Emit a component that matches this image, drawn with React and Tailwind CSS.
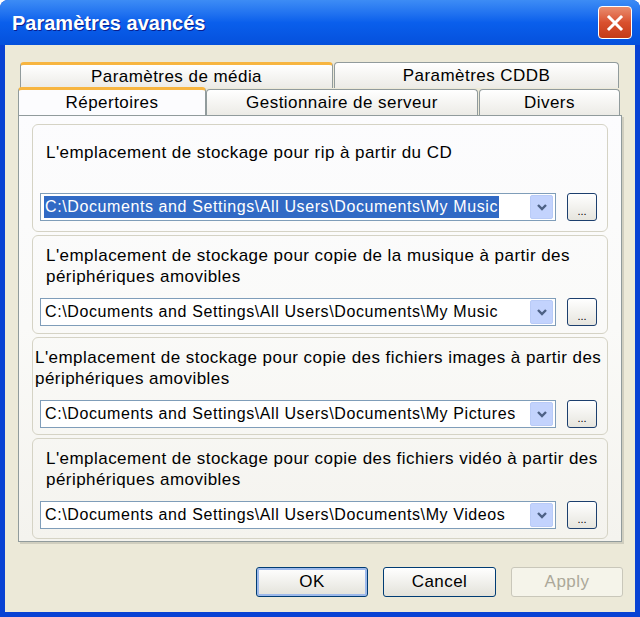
import { useState } from "react";

const font = { fontFamily: '"Liberation Sans", Arial, sans-serif' };

const Chevron = () => (
    <svg width="12" height="9" viewBox="0 0 12 9">
        <path d="M2 2 L6 6 L10 2" fill="none" stroke="#4D6185" strokeWidth="2.4" />
    </svg>
);

const Combo = ({ value, selected }) => (
    <div className="flex items-center gap-[11px]">
        <div className="flex items-center h-[28px] w-[516px] border border-[#7F9DB9] bg-white pl-[3px] pr-[2px]">
            <div className="flex-1 flex items-center h-[22px] overflow-hidden whitespace-nowrap text-[16px] tracking-[0.6px]">
                <span className={selected ? "bg-[#316AC5] text-white px-[1px] leading-[22px]" : "px-[1px] leading-[22px] text-black"}>
                    {value}
                </span>
            </div>
            <div className="w-[23px] h-[24px] rounded-[2px] bg-[#C3D3FD] border border-[#B9CBF7] flex items-center justify-center">
                <Chevron />
            </div>
        </div>
        <button className="w-[30px] h-[28px] rounded-[3px] border border-[#1C3F6E] bg-gradient-to-b from-white to-[#E6E5DE] text-[11px] leading-[12px] tracking-normal text-black pt-[8px]">
            ...
        </button>
    </div>
);

const Group = ({ lines, value, selected, h, pl, pt, gap }) => (
    <div className={`rounded-[6px] border border-[#D5D3C5] flex flex-col ${h}`}>
        <div className={`${pl} ${pt} leading-[21px] text-black whitespace-nowrap`}>
            {lines.map((l) => <div key={l}>{l}</div>)}
        </div>
        <div className={`pl-[7px] ${gap}`}>
            <Combo value={value} selected={selected} />
        </div>
    </div>
);

export default function App() {
    const [tab] = useState("rep");

    return (
        <div className="w-[640px] h-[617px] bg-white" style={font}>
            <div className="w-full h-full flex flex-col rounded-t-[8px] overflow-hidden bg-[#0842D4]">
                <div className="h-[45px] flex items-center justify-between pl-[12px] pr-[8px] bg-gradient-to-b from-[#3D8CF5] via-[#0A5FEC] to-[#0550DC]">
                    <span className="text-white font-bold text-[20px]" style={{ textShadow: "1px 1px 0 #0A1E8C" }}>
                        Paramètres avancés
                    </span>
                    <div className="w-[34px] h-[33px] rounded-[4px] border border-white bg-gradient-to-b from-[#E98C6E] via-[#D9502E] to-[#C43A17] flex items-center justify-center">
                        <svg width="18" height="18" viewBox="0 0 18 18">
                            <path d="M3 3 L15 15 M15 3 L3 15" stroke="white" strokeWidth="3" strokeLinecap="square" />
                        </svg>
                    </div>
                </div>

                <div className="flex-1 mx-[5px] mb-[5px] bg-[#ECE9D8] flex flex-col pt-[17px] pl-[13px] pr-[12px] text-[17px] tracking-[0.45px]">
                    {/* back row of tabs */}
                    <div className="flex pl-[2px] h-[26px]">
                        <div className="w-[313px] h-[26px] rounded-t-[4px] border border-b-0 border-[#919B9C] border-t-[3px] border-t-[#F7B540] bg-gradient-to-b from-white to-[#ECEBE6] flex items-center justify-center">
                            Paramètres de média
                        </div>
                        <div className="w-[285px] ml-[1px] h-[26px] rounded-t-[4px] border border-b-0 border-[#919B9C] bg-gradient-to-b from-white to-[#ECEBE6] flex items-center justify-center">
                            Paramètres CDDB
                        </div>
                    </div>
                    {/* front row of tabs */}
                    <div className="flex h-[27px] items-end">
                        <div className={`w-[188px] h-[28px] rounded-t-[4px] border border-b-0 border-[#919B9C] border-t-[3px] border-t-[#F7B540] bg-[#FCFCFE] flex items-center justify-center relative z-10 ${tab === "rep" ? "" : ""}`}>
                            Répertoires
                        </div>
                        <div className="w-[272px] h-[26px] rounded-t-[4px] border border-b-0 border-[#919B9C] bg-gradient-to-b from-white to-[#ECEBE6] flex items-center justify-center">
                            Gestionnaire de serveur
                        </div>
                        <div className="w-[141px] ml-[1px] h-[26px] rounded-t-[4px] border border-b-0 border-[#919B9C] bg-gradient-to-b from-white to-[#ECEBE6] flex items-center justify-center">
                            Divers
                        </div>
                    </div>

                    {/* panel */}
                    <div className="w-[604px] h-[427px] border border-[#919B9C] bg-gradient-to-b from-[#FCFCFE] via-[#FAFAF8] to-[#F4F3EE] shadow-[2px_2px_0_#D0CEBF] flex flex-col gap-[3px] pt-[8px] px-[13px]">
                        <Group
                            lines={["L'emplacement de stockage pour rip à partir du CD"]}
                            value="C:\Documents and Settings\All Users\Documents\My Music"
                            selected
                            h="h-[108px]"
                            pl="pl-[13px]"
                            pt="pt-[17px]"
                            gap="pt-[30px]"
                        />
                        <Group
                            lines={["L'emplacement de stockage pour copie de la musique à partir des", "périphériques amovibles"]}
                            value="C:\Documents and Settings\All Users\Documents\My Music"
                            h="h-[99px]"
                            pl="pl-[13px]"
                            pt="pt-[9px]"
                            gap="pt-[11px]"
                        />
                        <Group
                            lines={["L'emplacement de stockage pour copie des fichiers images à partir des", "périphériques amovibles"]}
                            value="C:\Documents and Settings\All Users\Documents\My Pictures"
                            h="h-[98px]"
                            pl="pl-[2px]"
                            pt="pt-[9px]"
                            gap="pt-[11px]"
                        />
                        <Group
                            lines={["L'emplacement de stockage pour copie des fichiers vidéo à partir des", "périphériques amovibles"]}
                            value="C:\Documents and Settings\All Users\Documents\My Videos"
                            h="h-[101px]"
                            pl="pl-[13px]"
                            pt="pt-[9px]"
                            gap="pt-[11px]"
                        />
                    </div>

                    {/* buttons */}
                    <div className="flex justify-end gap-[15px] mt-[25px]">
                        <button className="w-[112px] h-[30px] rounded-[3px] border border-[#003C74] bg-gradient-to-b from-white to-[#E3E2DA] shadow-[inset_0_0_0_2px_#9DB9EB] text-black">
                            OK
                        </button>
                        <button className="w-[113px] h-[30px] rounded-[3px] border border-[#003C74] bg-gradient-to-b from-white to-[#E3E2DA] text-black">
                            Cancel
                        </button>
                        <button className="w-[112px] h-[30px] rounded-[3px] border border-[#C9C7BA] bg-[#F5F4EA] text-[#ACA899]">
                            Apply
                        </button>
                    </div>
                </div>
            </div>
        </div>
    );
}
